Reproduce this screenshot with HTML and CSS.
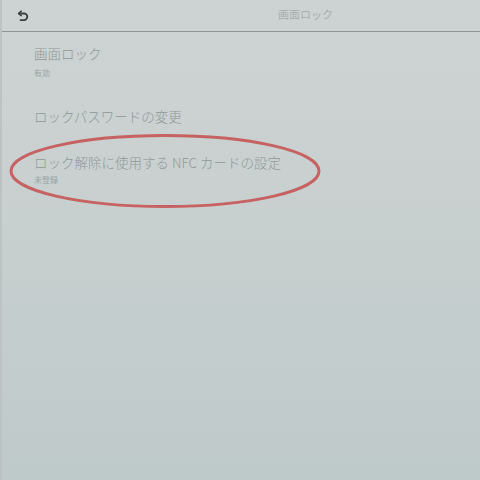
FILE: index.html
```html
<!DOCTYPE html>
<html lang="ja">
<head>
	<meta charset="UTF-8">
	<meta name="viewport" content="width=device-width, initial-scale=1.0">
	<title>画面ロック</title>
	<link rel="stylesheet" href="styles.css">
</head>
<body>
	<div class="screen">
		<div class="header">
			<span class="back-btn">
				<svg width="14" height="14" viewBox="0 0 14 14">
					<path d="M3 4.5 H8 A3.3 3.3 0 0 1 8 11.1 H4.5" fill="none" stroke="#3c4242" stroke-width="1.8" stroke-linecap="round"/>
					<path d="M5.2 2.2 L2.6 4.5 L5.2 6.6" fill="none" stroke="#3c4242" stroke-width="1.6" stroke-linecap="round" stroke-linejoin="round"/>
				</svg>
			</span>
			<span class="header-title">画面ロック</span>
		</div>
		<div class="setting-list">
			<div class="setting-item">
				<div class="setting-title">画面ロック</div>
				<div class="setting-sub">有効</div>
			</div>
			<div class="setting-item">
				<div class="setting-title">ロックパスワードの変更</div>
			</div>
			<div class="setting-item setting-nfc">
				<div class="setting-title">ロック解除に使用する NFC カードの設定</div>
				<div class="setting-sub">未登録</div>
			</div>
			<svg class="highlight" width="320" height="80" viewBox="0 0 320 80">
				<ellipse cx="158" cy="38" rx="154" ry="35.5" fill="none" stroke="#c76262" stroke-width="3"/>
			</svg>
		</div>
	</div>
</body>
</html>
```

FILE: styles.css
```css
body {
	margin: 0;
	font-family: "Noto Sans CJK JP", "Noto Sans", sans-serif;
	background: #c8cfcf;
}
.screen {
	width: 480px;
	height: 480px;
	background: linear-gradient(180deg, #cdd3d2 0%, #c8d0cf 45%, #bec9ca 100%);
	border-left: 2px solid #bcc3c3;
	box-sizing: border-box;
	overflow: hidden;
}
.header {
	height: 31px;
	display: flex;
	align-items: center;
	border-bottom: 1.5px solid #8e9696;
	position: relative;
}
.back-btn {
	display: flex;
	margin-left: 14px;
	margin-top: 1px;
}
.header-title {
	position: absolute;
	left: 276px;
	top: 6px;
	font-size: 11px;
	line-height: 16px;
	color: #a8aeae;
}
.setting-list {
	position: relative;
	padding-left: 32px;
	padding-top: 12px;
}
.setting-item {
	margin-bottom: 28px;
}
.setting-title {
	font-size: 13.5px;
	font-weight: 300;
	line-height: 18px;
	color: #929898;
}
.setting-sub {
	margin-top: 5px;
	font-size: 8px;
	line-height: 12px;
	color: #9ba1a1;
}
.setting-nfc .setting-sub {
	margin-top: 3px;
}
.highlight {
	position: absolute;
	left: 5px;
	top: 101px;
}
```
